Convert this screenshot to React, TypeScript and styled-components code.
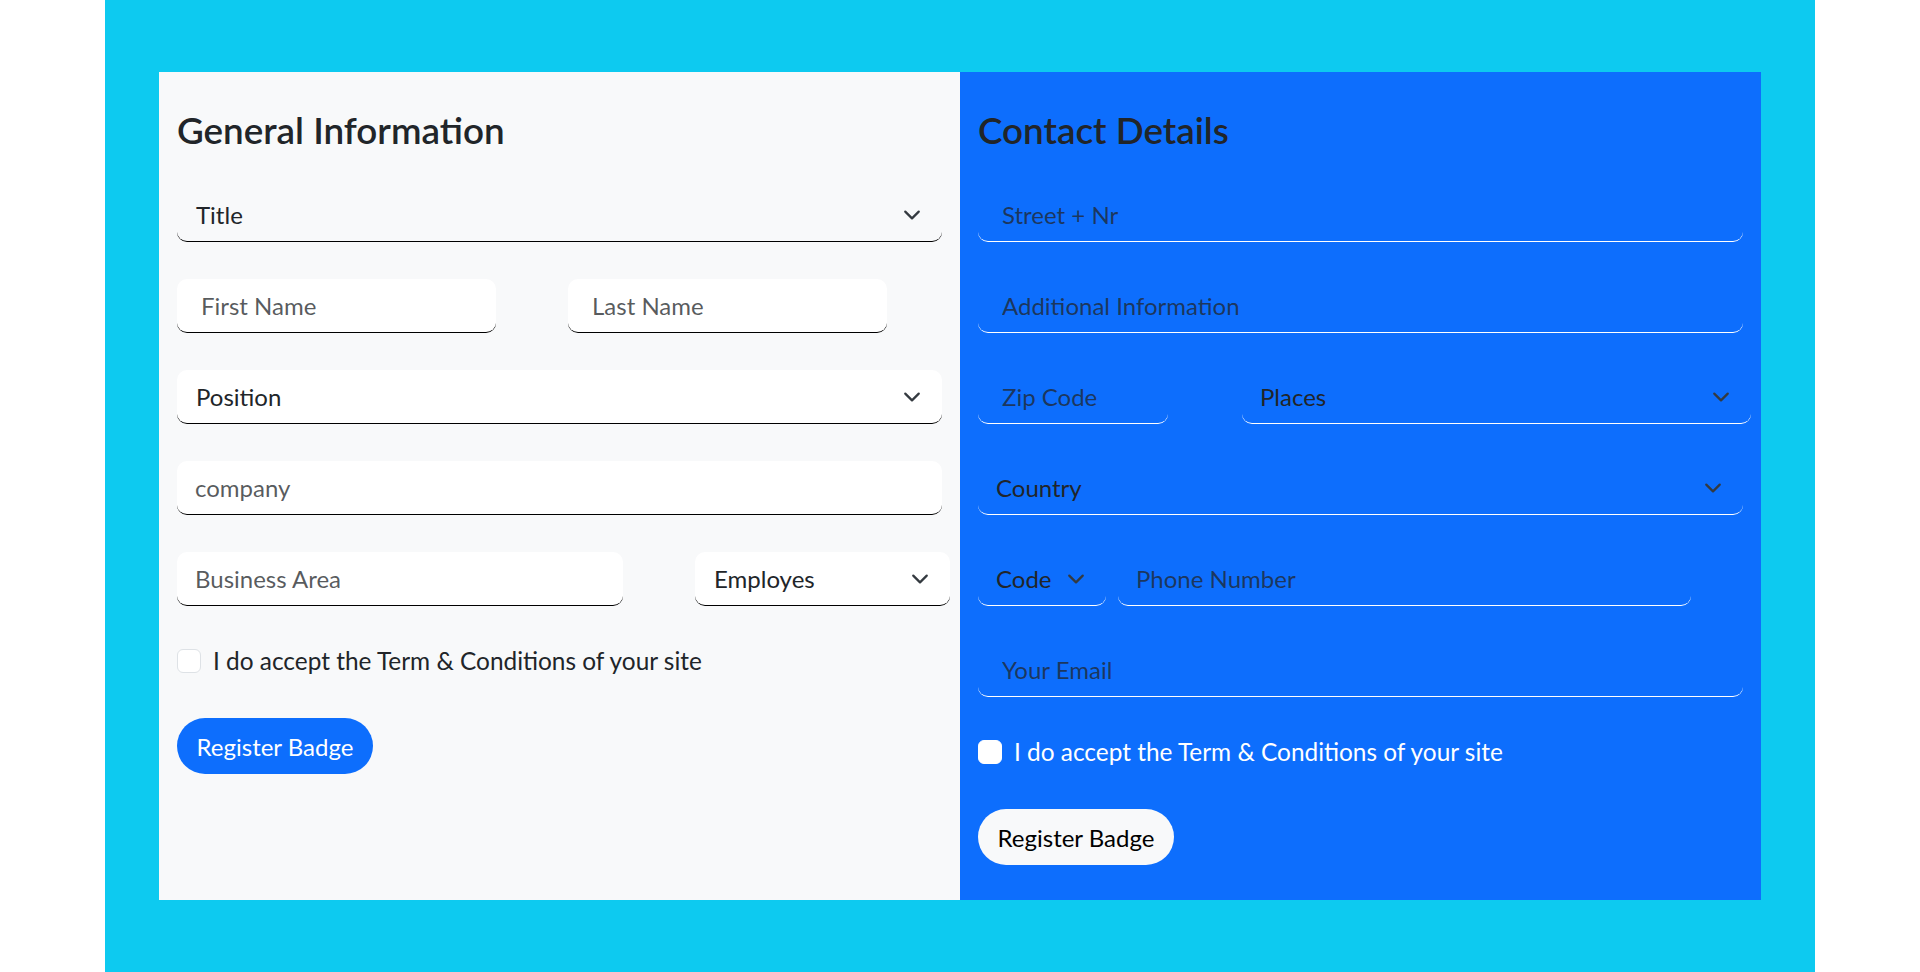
import React from "react";
import styled, { createGlobalStyle } from "styled-components";

const Global = createGlobalStyle`
  html, body { margin: 0; padding: 0; background: #ffffff; }
  body { font-family: Lato, "Noto Sans", sans-serif; color: #212529; }
  * { box-sizing: border-box; }
`;

type Tone = "light" | "blue";

const Stage = styled.div`
  margin-left: 105px;
  width: 1710px;
  min-height: 972px;
  background: #0dcaf0;
  padding: 72px 54px 72px;
`;

const Panel = styled.div`
  display: grid;
  grid-template-columns: minmax(0, 1fr) minmax(0, 1fr);
  height: 828px;
`;

const Column = styled.section<{ $tone: Tone }>`
  background: ${(p) => (p.$tone === "light" ? "#f8f9fa" : "#0d6efd")};
  padding: 35px 18px 0;
  display: flex;
  flex-direction: column;
  min-width: 0;
`;

const Heading = styled.h2`
  margin: 0 0 35px;
  font-size: 36.8px;
  line-height: 46px;
  font-weight: 600;
  color: #212529;
`;

const Fields = styled.div`
  display: flex;
  flex-direction: column;
  gap: 37px;
`;

const Row = styled.div<{ $gap: number }>`
  display: flex;
  gap: ${(p) => p.$gap}px;
`;

type FieldLook = { $w?: number; $fill: boolean; $line: string; $pad: number };

const TextField = styled.input<FieldLook>`
  display: block;
  flex: none;
  height: 54px;
  width: ${(p) => (p.$w ? `${p.$w}px` : "100%")};
  padding: 0 ${(p) => p.$pad}px;
  font-family: inherit;
  font-size: 24px;
  color: #212529;
  background: ${(p) => (p.$fill ? "#ffffff" : "transparent")};
  border: none;
  border-bottom: 1px solid ${(p) => p.$line};
  border-radius: 10px;
  outline: none;
  &::placeholder {
    color: rgba(33, 37, 41, 0.75);
    opacity: 1;
  }
`;

const SelectBox = styled.div<FieldLook>`
  flex: none;
  height: 54px;
  width: ${(p) => (p.$w ? `${p.$w}px` : "100%")};
  display: flex;
  align-items: center;
  justify-content: space-between;
  padding: 0 21px 0 ${(p) => p.$pad}px;
  font-size: 24px;
  color: #212529;
  background: ${(p) => (p.$fill ? "#ffffff" : "transparent")};
  border-bottom: 1px solid ${(p) => p.$line};
  border-radius: 10px;
  cursor: pointer;
`;

const Chevron = styled.svg`
  width: 18px;
  height: 18px;
  flex: none;
`;

const CheckRow = styled.label<{ $tone: Tone }>`
  display: flex;
  align-items: center;
  gap: 12px;
  height: 24px;
  margin-top: 43px;
  font-size: 24.4px;
  line-height: 24px;
  color: ${(p) => (p.$tone === "light" ? "#212529" : "#ffffff")};
  cursor: pointer;
`;

const Box = styled.span<{ $tone: Tone }>`
  width: 24px;
  height: 24px;
  flex: none;
  border-radius: 6px;
  background: #ffffff;
  border: 1px solid ${(p) => (p.$tone === "light" ? "#dee2e6" : "#ffffff")};
`;

const Button = styled.button<{ $tone: Tone }>`
  align-self: flex-start;
  margin-top: 45px;
  height: 56px;
  width: 196px;
  padding: 0;
  border: none;
  border-radius: 28px;
  font-family: inherit;
  font-size: 24px;
  background: ${(p) => (p.$tone === "light" ? "#0d6efd" : "#f8f9fa")};
  color: ${(p) => (p.$tone === "light" ? "#ffffff" : "#000000")};
  cursor: pointer;
`;

const Arrow = () => (
  <Chevron viewBox="0 0 16 16" aria-hidden="true">
    <path
      d="m2 5 6 6 6-6"
      fill="none"
      stroke="#343a40"
      strokeWidth="2"
      strokeLinecap="round"
      strokeLinejoin="round"
    />
  </Chevron>
);

type SelProps = { label: string; w?: number; fill: boolean; line: string; pad?: number };
const Select = ({ label, w, fill, line, pad = 19 }: SelProps) => (
  <SelectBox $w={w} $fill={fill} $line={line} $pad={pad}>
    <span>{label}</span>
    <Arrow />
  </SelectBox>
);

type InProps = { ph: string; w?: number; fill: boolean; line: string; pad?: number };
const Input = ({ ph, w, fill, line, pad = 24 }: InProps) => (
  <TextField placeholder={ph} $w={w} $fill={fill} $line={line} $pad={pad} />
);

const DARK = "#000000";
const WHITE = "#ffffff";

export default function App() {
  return (
    <>
      <Global />
      <Stage>
        <Panel>
          <Column $tone="light">
            <Heading>General Information</Heading>
            <Fields>
              <Select label="Title" fill={false} line={DARK} />
              <Row $gap={72}>
                <Input ph="First Name" w={319} fill line={DARK} />
                <Input ph="Last Name" w={319} fill line={DARK} />
              </Row>
              <Select label="Position" fill line={DARK} />
              <Input ph="company" fill line={DARK} pad={18} />
              <Row $gap={72}>
                <Input ph="Business Area" w={446} fill line={DARK} pad={18} />
                <Select label="Employes" w={255} fill line={DARK} />
              </Row>
            </Fields>
            <CheckRow $tone="light">
              <Box $tone="light" />
              I do accept the Term &amp; Conditions of your site
            </CheckRow>
            <Button $tone="light">Register Badge</Button>
          </Column>
          <Column $tone="blue">
            <Heading>Contact Details</Heading>
            <Fields>
              <Input ph="Street + Nr" fill={false} line={WHITE} />
              <Input ph="Additional Information" fill={false} line={WHITE} />
              <Row $gap={74}>
                <Input ph="Zip Code" w={190} fill={false} line={WHITE} />
                <Select label="Places" w={509} fill={false} line={WHITE} pad={18} />
              </Row>
              <Select label="Country" fill={false} line={WHITE} pad={18} />
              <Row $gap={12}>
                <Select label="Code" w={128} fill={false} line={WHITE} pad={18} />
                <Input ph="Phone Number" w={573} fill={false} line={WHITE} pad={18} />
              </Row>
              <Input ph="Your Email" fill={false} line={WHITE} />
            </Fields>
            <CheckRow $tone="blue">
              <Box $tone="blue" />
              I do accept the Term &amp; Conditions of your site
            </CheckRow>
            <Button $tone="blue">Register Badge</Button>
          </Column>
        </Panel>
      </Stage>
    </>
  );
}
